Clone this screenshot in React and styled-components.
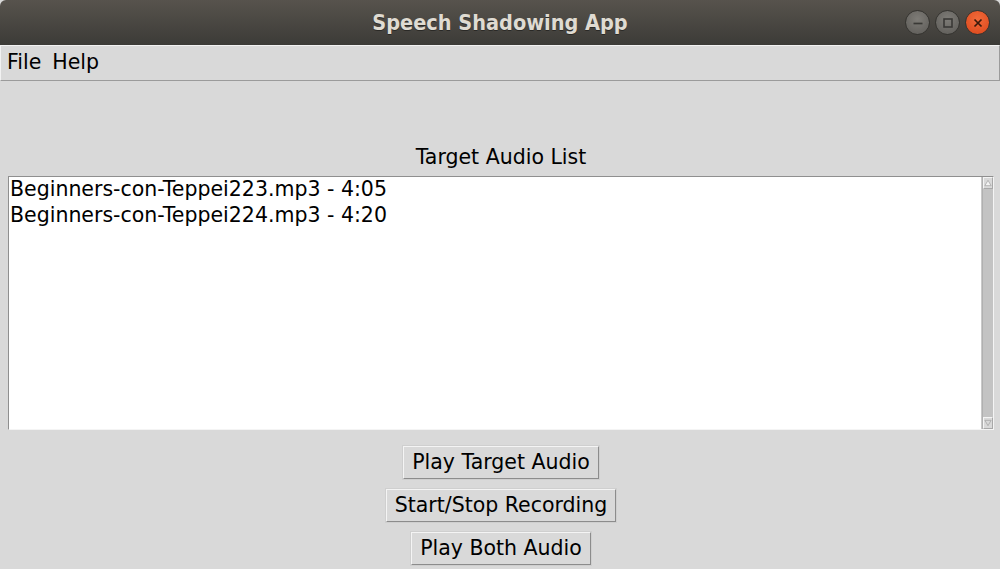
import React from "react";
import styled, { createGlobalStyle } from "styled-components";

const GlobalStyle = createGlobalStyle`
  html, body {
    margin: 0;
    padding: 0;
    background: #d9d9d9;
  }
  * {
    box-sizing: border-box;
  }
`;

const Window = styled.div`
  width: 1000px;
  height: 569px;
  display: flex;
  flex-direction: column;
  background: #d9d9d9;
  overflow: hidden;
  font-family: "DejaVu Sans", sans-serif;
  color: #000;
`;

const TitleBar = styled.div`
  height: 45px;
  flex-shrink: 0;
  position: relative;
  display: flex;
  align-items: center;
  justify-content: center;
  background: linear-gradient(#57534d, #3c3b37);
  border-top-left-radius: 6px;
  border-top-right-radius: 6px;
`;

const Title = styled.div`
  font-family: "DejaVu Sans", sans-serif;
  font-stretch: condensed;
  font-weight: bold;
  font-size: 21.5px;
  color: #dfdbd2;
  text-shadow: 0 1px 0 #2a2926;
`;

const Controls = styled.div`
  position: absolute;
  right: 10px;
  top: 10px;
  display: flex;
  gap: 5px;
`;

const CircleButton = styled.div`
  width: 25px;
  height: 25px;
  border-radius: 50%;
  border: 1px solid #34332f;
  background: ${(p) =>
    p.close
      ? "radial-gradient(circle at 50% 35%, #f26a3a, #d9461a)"
      : "radial-gradient(circle at 50% 35%, #7e7c77, #5c5a56)"};
  display: flex;
  align-items: center;
  justify-content: center;
`;

const MenuBar = styled.div`
  height: 36px;
  flex-shrink: 0;
  display: flex;
  align-items: center;
  gap: 11px;
  padding: 0 6px 1px;
  background: #d9d9d9;
  border-top: 1px solid #f2f2f2;
  border-bottom: 1px solid #9b9b9b;
  border-left: 1px solid #f2f2f2;
  border-right: 1px solid #9b9b9b;
  font-size: 20.5px;
`;

const MenuItem = styled.span`
  line-height: 1;
`;

const Content = styled.div`
  display: flex;
  flex-direction: column;
  align-items: center;
  padding: 64px 6px 0 8px;
`;

const Label = styled.div`
  font-size: 20.5px;
  height: 31px;
  line-height: 24px;
`;

const ListBox = styled.div`
  width: 986px;
  height: 254px;
  display: flex;
  background: #fff;
  border-top: 1px solid #8f8f8f;
  border-left: 1px solid #8f8f8f;
  border-bottom: 1px solid #f4f4f4;
  border-right: 1px solid #f4f4f4;
`;

const Items = styled.div`
  flex: 1;
  border-right: 1px solid #c9c9c9;
`;

const Item = styled.div`
  font-size: 20.5px;
  line-height: 25px;
  height: 26px;
  padding-left: 1px;
  white-space: nowrap;
`;

const ScrollBar = styled.div`
  width: 11px;
  display: flex;
  flex-direction: column;
  justify-content: space-between;
  background: #c3c3c3;
  border-left: 1px solid #b0b0b0;
`;

const Arrow = styled.div`
  height: 12px;
  background: #d9d9d9;
  display: flex;
  align-items: center;
  justify-content: center;
  border-top: 1px solid #f4f4f4;
  border-left: 1px solid #f4f4f4;
  border-bottom: 1px solid #a8a8a8;
  border-right: 1px solid #a8a8a8;
`;

const Buttons = styled.div`
  display: flex;
  flex-direction: column;
  align-items: center;
  gap: 10px;
  margin-top: 16px;
`;

const Button = styled.button`
  font-family: "DejaVu Sans", sans-serif;
  font-size: 20.5px;
  height: 33px;
  padding: 0 8px 1px;
  background: #d9d9d9;
  color: #000;
  border-top: 1px solid #f4f4f4;
  border-left: 1px solid #f4f4f4;
  border-bottom: 1px solid #8c8c8c;
  border-right: 1px solid #8c8c8c;
  outline: 1px solid #cfcfcf;
  border-radius: 0;
  cursor: pointer;
`;

const files = [
  "Beginners-con-Teppei223.mp3 - 4:05",
  "Beginners-con-Teppei224.mp3 - 4:20",
];

const App = () => {
  return (
    <Window>
      <GlobalStyle />
      <TitleBar>
        <Title>Speech Shadowing App</Title>
        <Controls>
          <CircleButton>
            <svg width="14" height="14" viewBox="0 0 14 14">
              <path d="M2.5 7.5h9" stroke="#3a3936" strokeWidth="1.7" />
            </svg>
          </CircleButton>
          <CircleButton>
            <svg width="14" height="14" viewBox="0 0 14 14">
              <rect x="3" y="3" width="8" height="8" fill="none" stroke="#3a3936" strokeWidth="1.6" />
            </svg>
          </CircleButton>
          <CircleButton close>
            <svg width="14" height="14" viewBox="0 0 14 14">
              <path d="M3.5 3.5l7 7M10.5 3.5l-7 7" stroke="#3b1a0c" strokeWidth="1.7" />
            </svg>
          </CircleButton>
        </Controls>
      </TitleBar>
      <MenuBar>
        <MenuItem>File</MenuItem>
        <MenuItem>Help</MenuItem>
      </MenuBar>
      <Content>
        <Label>Target Audio List</Label>
        <ListBox>
          <Items>
            {files.map((f) => (
              <Item key={f}>{f}</Item>
            ))}
          </Items>
          <ScrollBar>
            <Arrow>
              <svg width="9" height="8" viewBox="0 0 9 8">
                <path d="M4.5 1L8 7H1z" fill="#f4f4f4" stroke="#a0a0a0" strokeWidth="0.8" />
              </svg>
            </Arrow>
            <Arrow>
              <svg width="9" height="8" viewBox="0 0 9 8">
                <path d="M1 1h7L4.5 7z" fill="#d9d9d9" stroke="#a0a0a0" strokeWidth="0.8" />
              </svg>
            </Arrow>
          </ScrollBar>
        </ListBox>
        <Buttons>
          <Button>Play Target Audio</Button>
          <Button>Start/Stop Recording</Button>
          <Button>Play Both Audio</Button>
        </Buttons>
      </Content>
    </Window>
  );
};

export default App;
